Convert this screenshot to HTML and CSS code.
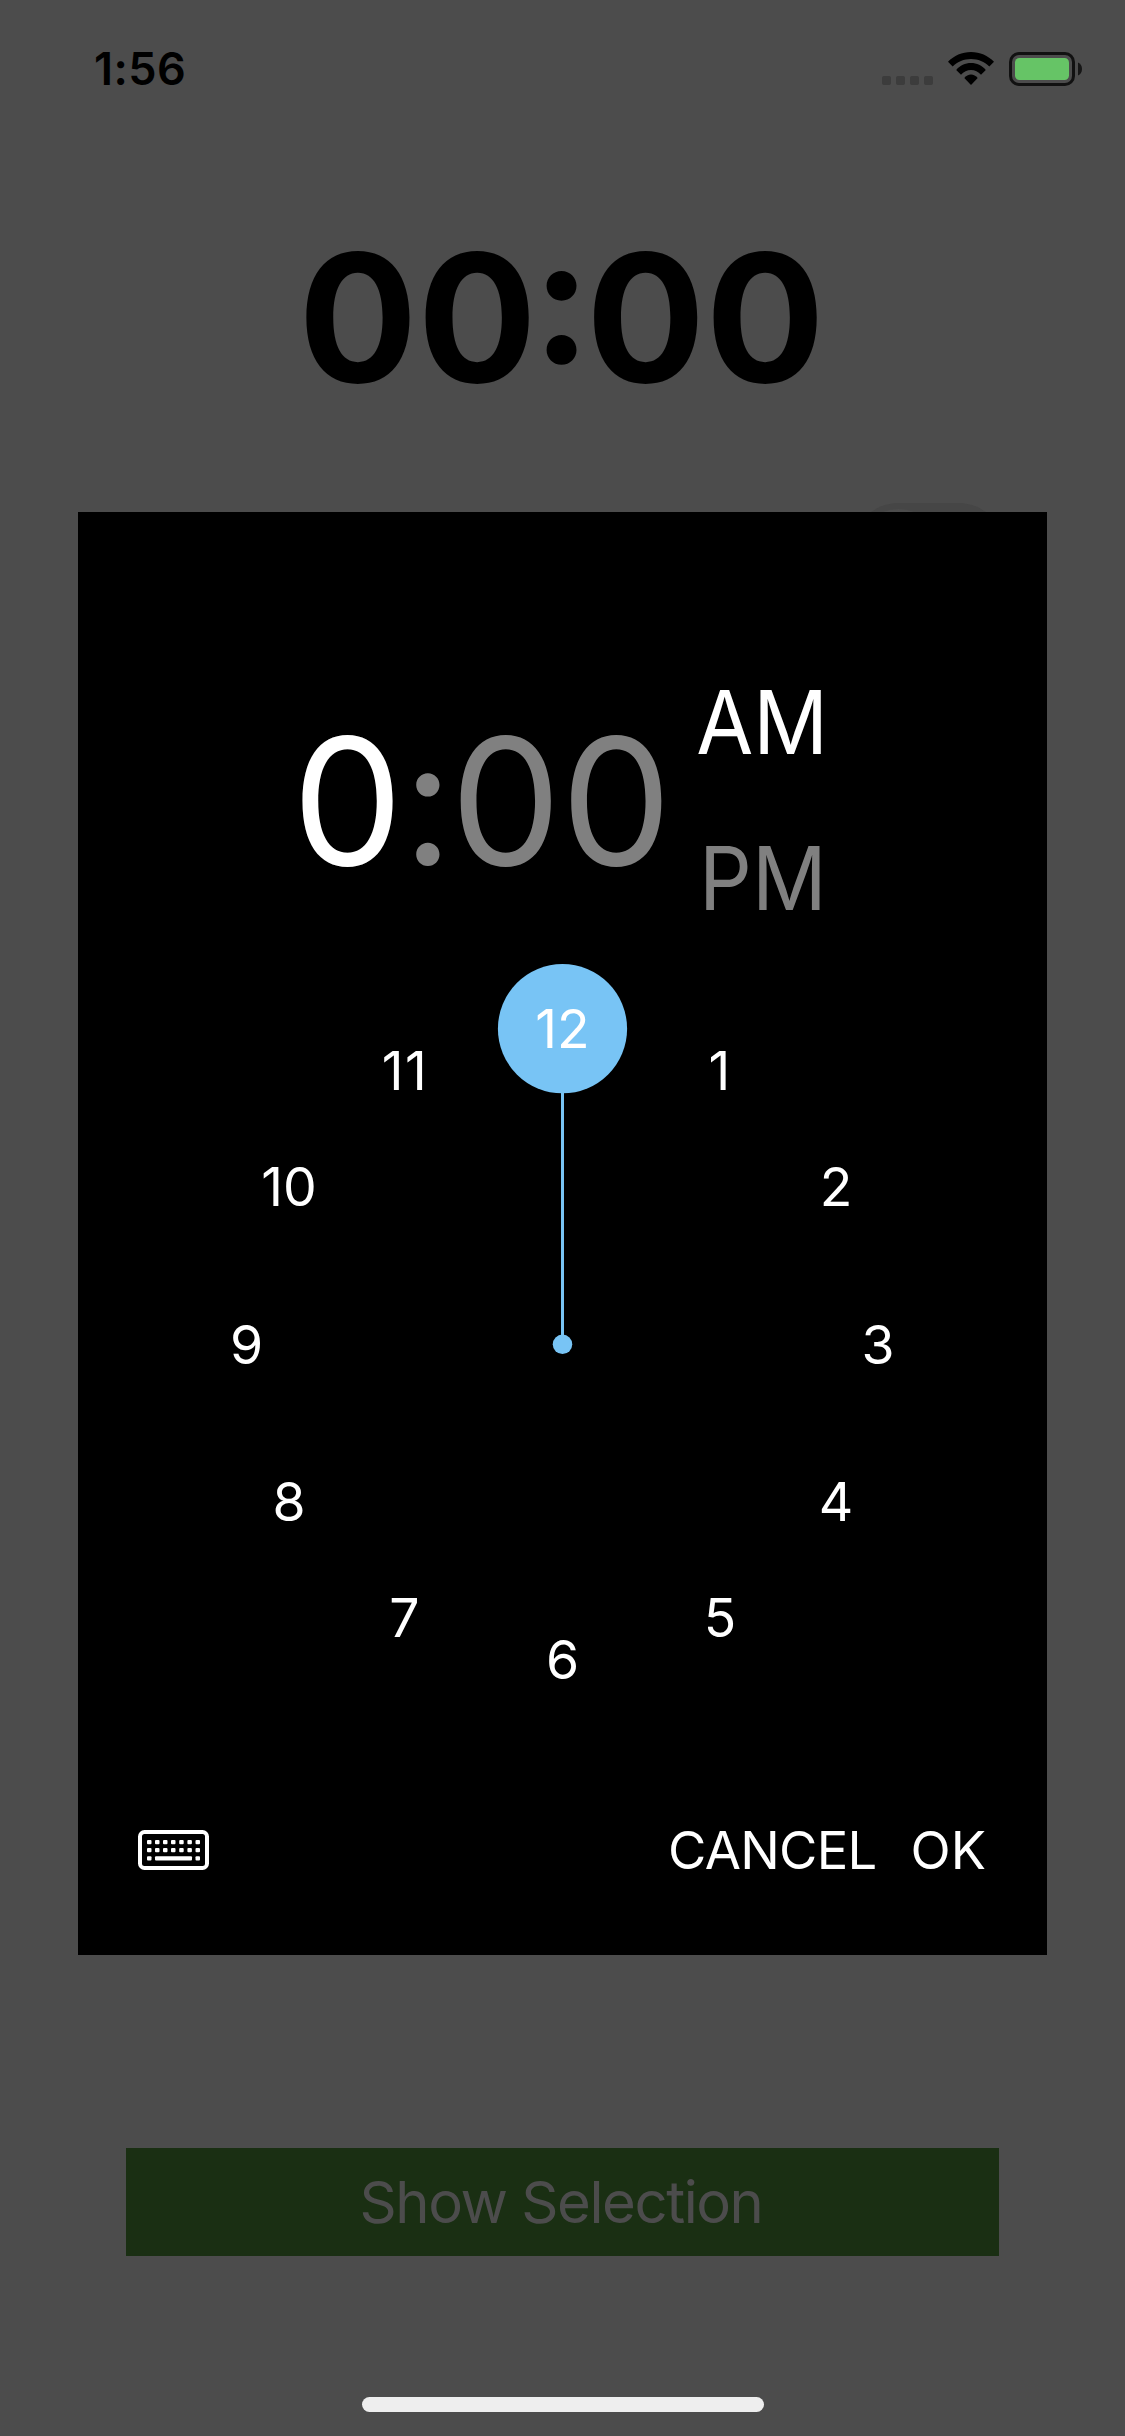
FILE: index.html
```html
<!DOCTYPE html>
<html lang="en">
<head>
<meta charset="utf-8">
<title>Time Picker</title>
<link rel="stylesheet" href="styles.css">
</head>
<body>
<main class="screen">
  <header class="status">
    <span class="status-time">1:56</span>
    <div class="status-icons">
      <svg class="signal" viewBox="0 0 51 9"><rect width="9" height="9" rx="2"/><rect x="14" width="9" height="9" rx="2"/><rect x="28" width="9" height="9" rx="2"/><rect x="42" width="9" height="9" rx="2"/></svg>
      <svg class="wifi" viewBox="0 0 46 33"><path d="M23 0C32 0 40 3.600 46 9.800L41.300 14.500C36.500 9.700 30 7 23 7S9.500 9.700 4.700 14.500L0 9.800C6 3.600 14 0 23 0Z"/><path d="M23 11C28.800 11 34 13.400 37.800 17.900L33 22.700C30.300 19.700 26.800 18 23 18S15.700 19.700 13 22.700L8.200 17.900C12 13.400 17.200 11 23 11Z"/><path d="M23 22.500C25.500 22.500 28 23.800 29.700 26.100L23 33L16.300 26.100C18 23.800 20.500 22.500 23 22.500Z"/></svg>
      <svg class="battery" viewBox="0 0 73 34"><rect x="1.500" y="1.500" width="63" height="31" rx="8.500" fill="none" stroke="#111" stroke-width="3"/><rect x="6" y="6" width="54" height="22" rx="4.500" fill="#66c466"/><path d="M69 10.500C71.500 11.500 73 14 73 17S71.500 22.500 69 23.500Z" fill="#161616"/></svg>
    </div>
  </header>
  <h1 class="time"><span>00</span><span class="time-colon">:</span><span>00</span></h1>
  <div class="switch-row"><div class="switch"><i class="knob"></i></div></div>
  <button class="show">Show Selection</button>
  <div class="home"></div>

  <section class="modal">
    <div class="readout">
      <div class="digits"><span class="hour">0</span><span class="colon">:</span><span class="minute">00</span></div>
      <div class="period"><span class="am">AM</span><span class="pm">PM</span></div>
    </div>
    <svg class="dial" viewBox="0 0 763 763">
      <path class="hand" d="M381.500 65V381"/>
      <circle class="accent" cx="381.500" cy="381.300" r="9.750"/>
      <circle class="accent" cx="381.500" cy="65.700" r="64.600"/>
      <text x="381.500" y="85">12</text>
      <text x="538.500" y="127">1</text>
      <text x="655" y="242.500">2</text>
      <text x="697" y="400.500">3</text>
      <text x="655" y="557.800">4</text>
      <text x="539" y="673.700">5</text>
      <text x="381.500" y="716">6</text>
      <text x="223.500" y="673.700">7</text>
      <text x="108" y="558">8</text>
      <text x="65.500" y="400.500">9</text>
      <text x="108" y="242.500">10</text>
      <text x="224" y="127" class="eleven">11</text>
    </svg>
    <footer class="actions">
      <svg class="keyboard" viewBox="0 0 71 40"><rect x="2" y="2" width="67" height="36" rx="4.500" fill="none" stroke="#fff" stroke-width="4"/><g fill="#fff"><rect x="9" y="10" width="4.500" height="4.200" rx="1"/><rect x="17" y="10" width="4.500" height="4.200" rx="1"/><rect x="25" y="10" width="4.500" height="4.200" rx="1"/><rect x="33" y="10" width="4.500" height="4.200" rx="1"/><rect x="41.200" y="10" width="4.500" height="4.200" rx="1"/><rect x="49.400" y="10" width="4.500" height="4.200" rx="1"/><rect x="57.500" y="10" width="4.500" height="4.200" rx="1"/><rect x="9" y="18" width="4.500" height="4.200" rx="1"/><rect x="17" y="18" width="4.500" height="4.200" rx="1"/><rect x="25" y="18" width="4.500" height="4.200" rx="1"/><rect x="33" y="18" width="4.500" height="4.200" rx="1"/><rect x="41.200" y="18" width="4.500" height="4.200" rx="1"/><rect x="49.400" y="18" width="4.500" height="4.200" rx="1"/><rect x="57.500" y="18" width="4.500" height="4.200" rx="1"/><rect x="9" y="26.200" width="4.500" height="4.200" rx="1"/><rect x="17" y="26.200" width="37" height="4.200" rx="1"/><rect x="57.500" y="26.200" width="4.500" height="4.200" rx="1"/></g></svg>
      <span class="cancel">CANCEL</span>
      <span class="ok">OK</span>
    </footer>
  </section>
</main>
</body>
</html>
```
FILE: styles.css
```css
* { box-sizing: border-box; }
body { margin: 0; background: #4c4c4c; font-family: Inter, "Liberation Sans", sans-serif; }
.screen { position: relative; width: 1125px; height: 2436px; overflow: hidden; display: flex; flex-direction: column; align-items: center; color: #000; }
.status { width: 100%; height: 132px; padding: 52px 43px 0 94px; display: flex; justify-content: space-between; align-items: flex-start; }
.status-time { font-size: 45px; line-height: 34px; font-weight: 600; letter-spacing: .4px; }
.status-icons { display: flex; align-items: flex-start; }
.signal { width: 51px; height: 9px; margin: 24px 15px 0 0; fill: #3c3c3c; }
.wifi { width: 46px; height: 33px; margin-right: 15px; }
.battery { width: 73px; height: 34px; }
.time { display: flex; margin: 78px 2px 0 0; height: 216px; line-height: 216px; font-size: 177px; font-weight: 700; white-space: nowrap; }
.time-colon { margin: 0 -5px; font-feature-settings: "case"; }
.switch-row { width: 100%; margin-top: 77px; padding-right: 120px; display: flex; justify-content: flex-end; }
.switch { width: 153px; height: 93px; padding: 6px; border-radius: 47px; background: #464646; }
.knob { display: block; width: 81px; height: 81px; border-radius: 50%; background: #4c4c4c; }
.show { width: 873px; height: 108px; margin: 1552px 0 0; padding: 0 3px 0 0; border: 0; background: #1a2f13; color: #4c4c4c; font: 400 58px/108px Inter, "Liberation Sans", sans-serif; letter-spacing: -1.450px; }
.home { width: 402px; height: 15px; margin-top: 141px; border-radius: 8px; background: #eee; }

.modal { position: absolute; left: 78px; top: 512px; width: 969px; height: 1443px; padding-top: 148px; background: #000; color: #fff; }
.readout { height: 290px; padding-left: 214px; display: flex; align-items: flex-start; }
.digits { width: 400px; line-height: 282px; font-size: 176px; white-space: nowrap; display: flex; }
.colon { margin: 0 -3px 0 -.500px; }
.minute { letter-spacing: -.600px; }
.colon, .minute, .pm { color: #808080; }
.period { display: flex; flex-direction: column; align-items: center; font-size: 88px; line-height: 156px; margin-top: -16px; }
.am, .pm { transform: scaleX(.94); }
.pm { margin-left: 2px; }
.dial { display: block; width: 763px; height: 763px; margin: 13px 0 0 103px; overflow: visible; }
.dial text { fill: #fff; font-size: 53.500px; text-anchor: middle; }
.dial .eleven { letter-spacing: 1.500px; }
.hand { stroke: #78c4f5; stroke-width: 3; }
.accent { fill: #78c4f5; }
.actions { display: flex; align-items: center; height: 60px; margin-top: 94px; padding: 0 61px 0 60px; font-size: 52.500px; line-height: 60px; }
.keyboard { width: 71px; height: 40px; margin-right: auto; }
.cancel { margin-right: 34px; letter-spacing: -.700px; }
```
